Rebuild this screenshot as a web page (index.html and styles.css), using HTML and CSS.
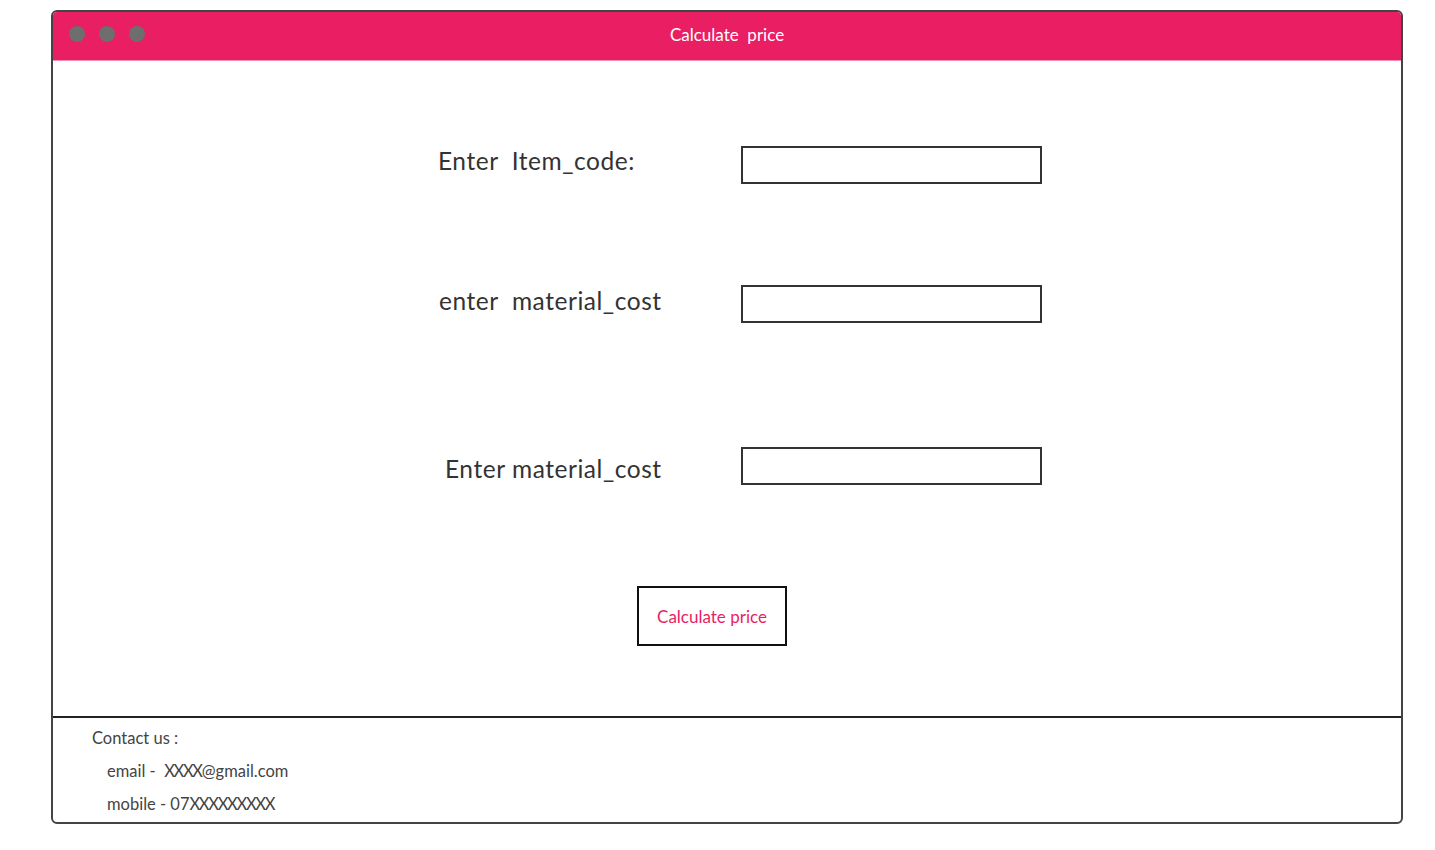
FILE: index.html
```html
<!DOCTYPE html>
<html>
<head>
<meta charset="utf-8">
<link rel="stylesheet" href="styles.css">
</head>
<body>
<div class="window">
  <div class="titlebar">
    <div class="dots"><span class="dot"></span><span class="dot"></span><span class="dot"></span></div>
    <div class="title">Calculate  price</div>
  </div>
  <div class="content">
    <div class="row row1">
      <label class="label l1">Enter  Item_code:</label>
      <div class="input"></div>
    </div>
    <div class="row row2">
      <label class="label l2">enter  material_cost</label>
      <div class="input"></div>
    </div>
    <div class="row row3">
      <label class="label l3">Enter material_cost</label>
      <div class="input"></div>
    </div>
    <div class="btnrow">
      <div class="button">Calculate price</div>
    </div>
  </div>
  <div class="footer">
    <div class="contact">Contact us :</div>
    <div class="line">email -  <span class="xs">XXXX</span>@gmail.com</div>
    <div class="line">mobile - 07<span class="xs">XXXXXXXXX</span></div>
  </div>
</div>
</body>
</html>
```
FILE: styles.css
```css
html, body {
  margin: 0;
  padding: 0;
  background: #ffffff;
}
body {
  font-family: "Lato", "Open Sans", sans-serif;
  padding: 10px 0 0 51px;
}
.window {
  width: 1348px;
  height: 810px;
  border: 2px solid #444444;
  border-radius: 6px;
  display: flex;
  flex-direction: column;
  overflow: hidden;
}
.titlebar {
  height: 48px;
  background: #e91e63;
  display: flex;
  align-items: center;
  position: relative;
  border-bottom: 1px solid #f48fb1;
}
.dots {
  display: flex;
  gap: 14px;
  padding-left: 16px;
  margin-top: -4px;
}
.dot {
  width: 16px;
  height: 16px;
  border-radius: 50%;
  background: #6e6e6e;
}
.title {
  position: absolute;
  left: 0;
  right: 0;
  top: 0;
  bottom: 4px;
  display: flex;
  align-items: center;
  justify-content: center;
  color: #ffffff;
  font-size: 17px;
  white-space: pre;
  padding-left: 0;
}
.content {
  flex: 1;
  display: flex;
  flex-direction: column;
  border-bottom: 2px solid #222222;
}
.row {
  display: flex;
  align-items: center;
  padding-left: 385px;
}
.row1 { margin-top: 85px; }
.row2 { margin-top: 101px; }
.row3 { margin-top: 124px; }
.label {
  width: 303px;
  font-size: 24.5px;
  letter-spacing: 0.55px;
  color: #333333;
  white-space: pre;
  margin-top: -10px;
}
.l2 { padding-left: 1px; width: 302px; margin-top: -8px; }
.l3 { padding-left: 7px; width: 296px; margin-top: 5px; }
.input {
  width: 297px;
  height: 34px;
  border: 2px solid #333333;
}
.btnrow {
  display: flex;
  padding-left: 584px;
  margin-top: 101px;
}
.button {
  width: 146px;
  height: 56px;
  border: 2px solid #111111;
  display: flex;
  align-items: center;
  justify-content: center;
  color: #e91e63;
  font-size: 17px;
}
.footer {
  height: 104px;
  padding: 9px 0 0 39px;
  color: #444444;
  font-size: 16.5px;
  box-sizing: border-box;
}
.contact {
  line-height: 22px;
}
.line {
  line-height: 22px;
  margin-top: 11px;
  padding-left: 15px;
  white-space: pre;
}
.xs {
  letter-spacing: -1.3px;
}
```
